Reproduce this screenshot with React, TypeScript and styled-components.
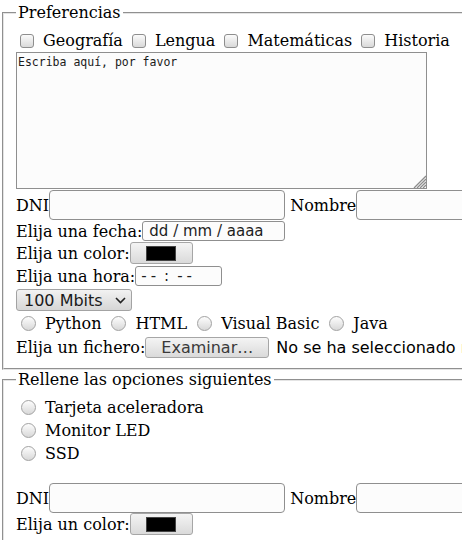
import React from "react";
import styled, { createGlobalStyle } from "styled-components";

const Global = createGlobalStyle`
  html, body { margin: 0; padding: 0; overflow: hidden; background: #fff; }
  body { font-family: "DejaVu Serif", serif; font-size: 16px; color: #000; }
  * { box-sizing: border-box; }
`;

const Page = styled.form`
  padding-top: 3px;
`;

const Fieldset = styled.fieldset`
  margin: 0 2px;
  border: 2px groove #e4e4e4;
  padding: 7px 12px 10px;
  min-width: max-content;
`;

const Legend = styled.legend`
  padding: 0 2px;
  font: 16px "DejaVu Serif", serif;
  line-height: 19px;
`;

const Row = styled.div<{ $h: number; $mt?: number }>`
  display: flex;
  align-items: center;
  white-space: nowrap;
  height: ${(p) => p.$h}px;
  margin-top: ${(p) => p.$mt ?? 0}px;
`;

const Text = styled.span<{ $ml?: number }>`
  margin-left: ${(p) => p.$ml ?? 0}px;
  font: 16px "DejaVu Serif", serif;
  line-height: 19px;
`;

const SansText = styled.span<{ $ml?: number }>`
  margin-left: ${(p) => p.$ml ?? 0}px;
  font: 16px "DejaVu Sans", sans-serif;
  line-height: 19px;
`;

const Check = styled.input.attrs({ type: "checkbox" })<{ $ml: number }>`
  appearance: none;
  flex: none;
  width: 14px;
  height: 14px;
  margin: 0 0 0 ${(p) => p.$ml}px;
  border: 1px solid #8e8e8e;
  border-radius: 3px;
  background: linear-gradient(#fbfbfb, #d9d9d9);
`;

const Radio = styled.input.attrs({ type: "radio" })<{ $ml: number }>`
  appearance: none;
  flex: none;
  width: 15px;
  height: 15px;
  margin: 0 0 0 ${(p) => p.$ml}px;
  border: 1px solid #a2a2a2;
  border-radius: 50%;
  background: linear-gradient(#fdfdfd, #d8d8d8);
`;

const AreaWrap = styled.div`
  position: relative;
  width: 411px;
  height: 137px;
`;

const TextArea = styled.textarea`
  display: block;
  width: 100%;
  height: 100%;
  margin: 0;
  padding: 2px 1px;
  border: 1px solid #8f8f8f;
  background: #fcfcfc;
  resize: none;
  font: 11.5px "DejaVu Sans Mono", monospace;
  &::placeholder { color: #1a1a1a; opacity: 1; }
`;

const Grip = styled.svg`
  position: absolute;
  right: 1px;
  bottom: 1px;
`;

const TextInput = styled.input.attrs({ type: "text" })<{ $w: number; $h: number }>`
  flex: none;
  width: ${(p) => p.$w}px;
  height: ${(p) => p.$h}px;
  margin: 0;
  padding: 0 4px;
  border: 1px solid #8f8f8f;
  border-radius: 4px;
  background: #fcfcfc;
  font: 16px "DejaVu Sans", sans-serif;
`;

const FieldBox = styled.span<{ $w: number; $pl: number }>`
  flex: none;
  display: flex;
  align-items: center;
  width: ${(p) => p.$w}px;
  height: 20px;
  padding-left: ${(p) => p.$pl}px;
  border: 1px solid #8f8f8f;
  border-radius: 3px;
  background: #fcfcfc;
  font: 15px "DejaVu Sans", sans-serif;
  color: #1e1e1e;
  white-space: pre;
`;

const Seg = styled.span`
  letter-spacing: 4px;
`;

const Sep = styled.span`
  margin: 0 8px 0 4px;
`;

const GrayButton = styled.button<{ $w: number; $h: number }>`
  flex: none;
  display: flex;
  align-items: center;
  justify-content: center;
  width: ${(p) => p.$w}px;
  height: ${(p) => p.$h}px;
  margin: 0;
  padding: 0;
  border: 1px solid #a6a6a6;
  border-radius: 3px;
  background: linear-gradient(#f4f4f4, #dadada);
  font: 16px "DejaVu Sans", sans-serif;
  color: #3a3a3a;
`;

const Swatch = styled.span`
  width: 30px;
  height: 15px;
  background: #000;
  border: 1px solid #444;
`;

const SelectBox = styled.div`
  flex: none;
  display: flex;
  align-items: center;
  justify-content: space-between;
  width: 116px;
  height: 22px;
  padding: 0 5px 0 7px;
  border: 1px solid #a3a3a3;
  border-radius: 3px;
  background: linear-gradient(#f2f2f2, #d6d6d6);
  font: 16px "DejaVu Sans", sans-serif;
  color: #1a1a1a;
`;

const ColorRow = ({ mt }: { mt: number }) => (
  <Row $h={22} $mt={mt}>
    <Text>Elija un color:</Text>
    <GrayButton type="button" $w={63} $h={22}>
      <Swatch />
    </GrayButton>
  </Row>
);

const NameRow = ({ mt }: { mt: number }) => (
  <Row $h={30} $mt={mt}>
    <Text>DNI</Text>
    <TextInput $w={236} $h={30} />
    <Text $ml={5}>Nombre</Text>
    <TextInput $w={236} $h={30} />
  </Row>
);

const subjects = ["Geografía", "Lengua", "Matemáticas", "Historia"];
const langs = ["Python", "HTML", "Visual Basic", "Java"];
const parts = ["Tarjeta aceleradora", "Monitor LED", "SSD"];

export default function App() {
  return (
    <>
      <Global />
      <Page onSubmit={(e) => e.preventDefault()}>
        <Fieldset>
          <Legend>Preferencias</Legend>
          <Row $h={23}>
            {subjects.map((s, i) => (
              <React.Fragment key={s}>
                <Check $ml={i === 0 ? 4 : 9} />
                <Text $ml={9}>{s}</Text>
              </React.Fragment>
            ))}
          </Row>
          <AreaWrap>
            <TextArea placeholder="Escriba aquí, por favor" />
            <Grip width="13" height="13" viewBox="0 0 13 13">
              {[3, 6, 9, 12].map((k) => (
                <line key={k} x1={13 - k} y1={13} x2={13} y2={13 - k} stroke="#8c8c8c" strokeWidth="1.3" />
              ))}
            </Grip>
          </AreaWrap>
          <NameRow mt={1} />
          <Row $h={20} $mt={1}>
            <Text>Elija una fecha:</Text>
            <FieldBox $w={143} $pl={6}>dd / mm / aaaa</FieldBox>
          </Row>
          <ColorRow mt={1} />
          <Row $h={20} $mt={2}>
            <Text>Elija una hora:</Text>
            <FieldBox $w={87} $pl={5}>
              <Seg>--</Seg>
              <Sep>:</Sep>
              <Seg>--</Seg>
            </FieldBox>
          </Row>
          <Row $h={22} $mt={3}>
            <SelectBox>
              <span>100 Mbits</span>
              <svg width="11" height="7" viewBox="0 0 11 7">
                <path d="M1 1 L5.5 5.5 L10 1" fill="none" stroke="#222" strokeWidth="1.6" />
              </svg>
            </SelectBox>
          </Row>
          <Row $h={23} $mt={1}>
            {langs.map((l, i) => (
              <React.Fragment key={l}>
                <Radio name="lang" $ml={i === 0 ? 5 : 10} />
                <Text $ml={9}>{l}</Text>
              </React.Fragment>
            ))}
          </Row>
          <Row $h={21} $mt={2}>
            <Text>Elija un fichero:</Text>
            <GrayButton type="button" $w={124} $h={21}>Examinar…</GrayButton>
            <SansText $ml={7}>No se ha seleccionado ningún archivo.</SansText>
          </Row>
        </Fieldset>
        <Fieldset>
          <Legend>Rellene las opciones siguientes</Legend>
          {parts.map((p) => (
            <Row $h={23} key={p}>
              <Radio name="part" $ml={5} />
              <Text $ml={9}>{p}</Text>
            </Row>
          ))}
          <NameRow mt={18} />
          <ColorRow mt={0} />
        </Fieldset>
      </Page>
    </>
  );
}
